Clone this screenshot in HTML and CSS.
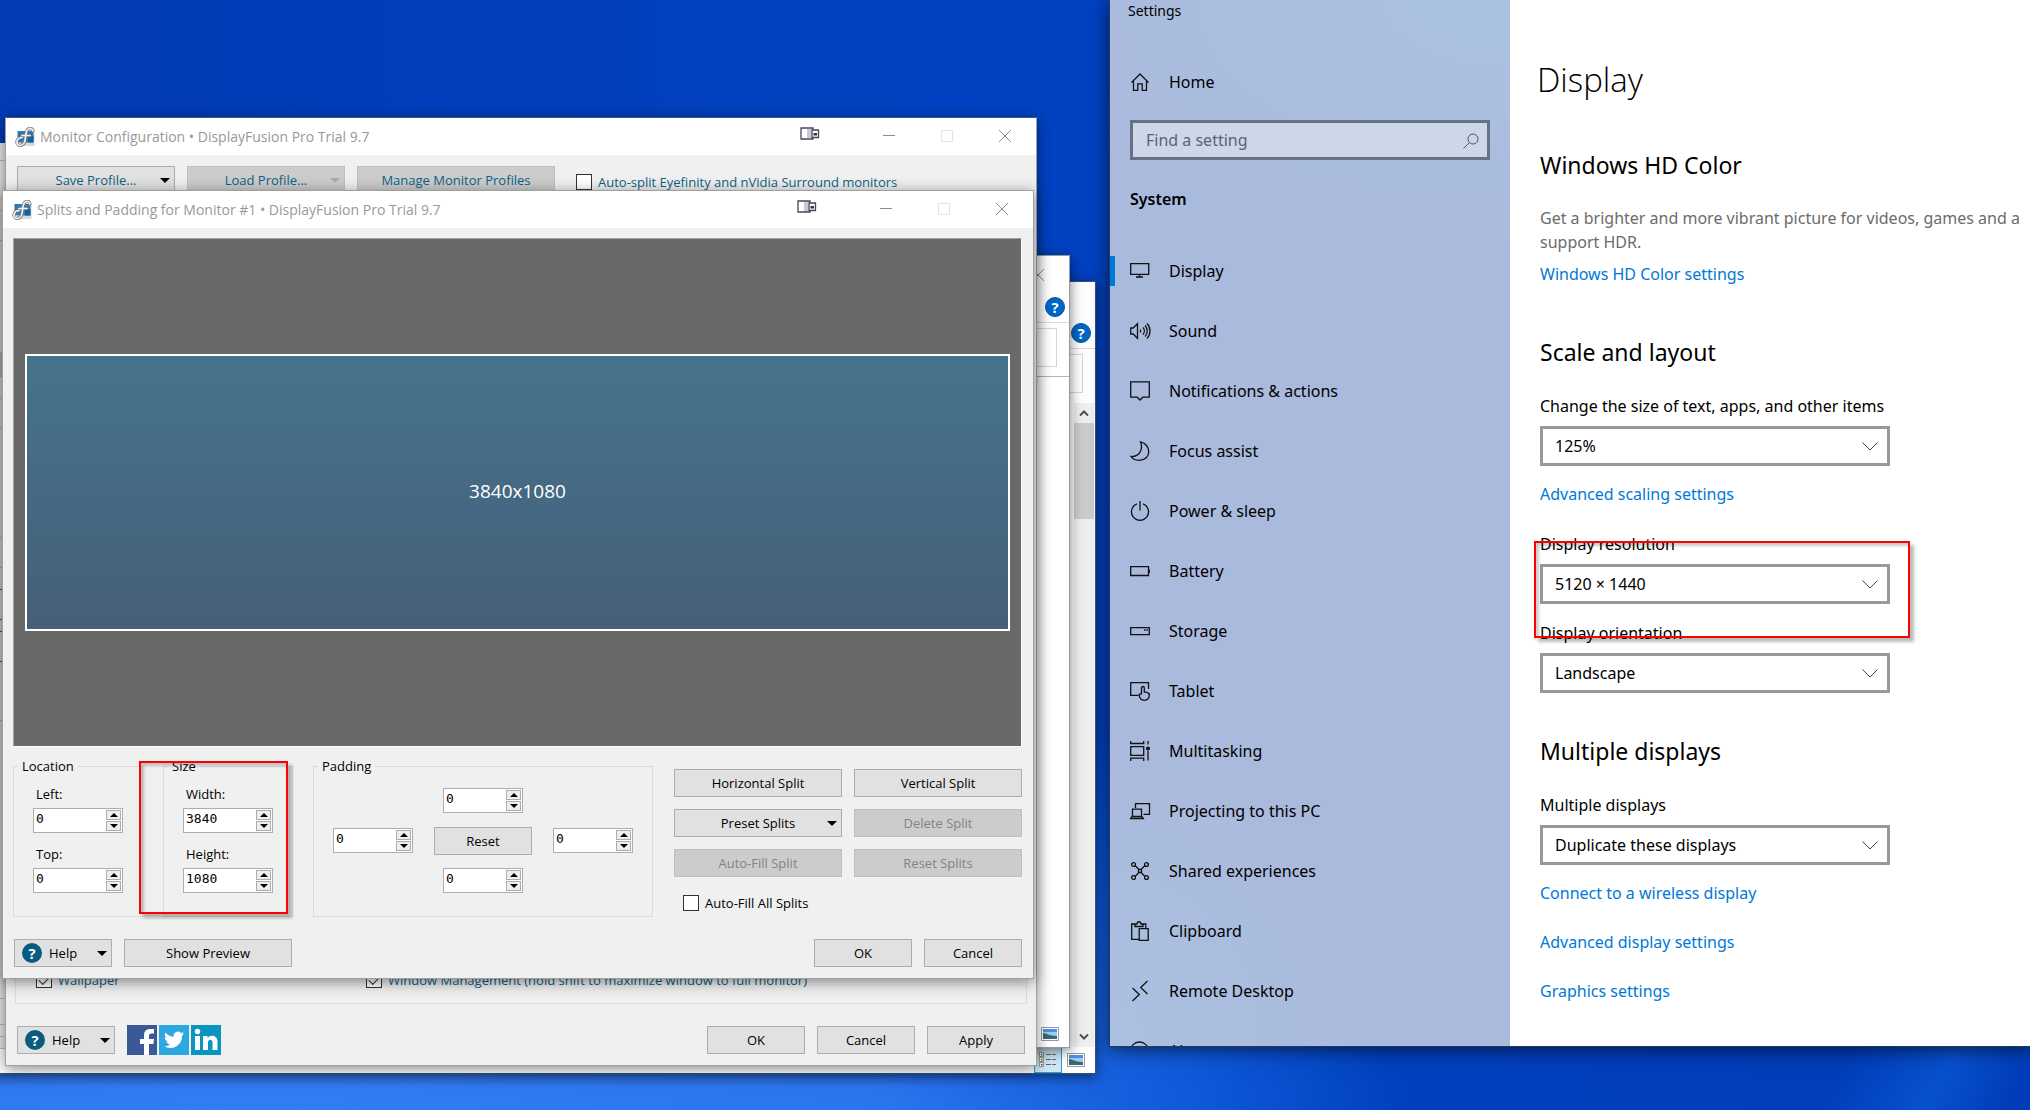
FILE: index.html
```html
<!DOCTYPE html>
<html lang="en">
<head>
<meta charset="utf-8">
<title>Desktop</title>
<link rel="stylesheet" href="styles.css">
</head>
<body>
<svg class="defs" aria-hidden="true">
  <symbol id="df" viewBox="0 0 20 20"><rect x="6" y="4" width="13.500" height="15" fill="#d9d9d9"/><rect x="2.500" y="4" width="16" height="11.500" fill="#2f79b3"/><rect x="13" y="9" width="5.500" height="6.500" fill="#12629e"/><g fill="none" stroke-linecap="round"><path d="M18 4c-1-4-6-3.500-7 2.500l-1 7c-.6 4-3.500 5.500-6.500 4.500-3-2-1.500-7.500 3.500-7.500M7 8.500h8" stroke="#777" stroke-width="3.200"/><path d="M18 4c-1-4-6-3.500-7 2.500l-1 7c-.6 4-3.500 5.500-6.500 4.500-3-2-1.500-7.500 3.500-7.500M7 8.500h8" stroke="#f2f2f2" stroke-width="1.700"/></g></symbol>
  <symbol id="dual" viewBox="0 0 20 14"><path d="M1 1h12v11H1z" fill="#fff" stroke="#44445a" stroke-width="1.300"/><path d="M7 2h4v9H7z" fill="#c9c9d2"/><path d="M12 3h6.500v7.500H12z" fill="#fff" stroke="#44445a" stroke-width="1.300"/><path d="M13.500 6h3.500v2.500h-3.500z" fill="#33334a"/></symbol>
  <symbol id="min" viewBox="0 0 12 12"><path d="M0 5.500h12" stroke="#8d8d8d"/></symbol>
  <symbol id="max" viewBox="0 0 12 12"><path d="M.5.500h11v11H.5z" fill="none" stroke="#e3e3e3"/></symbol>
  <symbol id="x" viewBox="0 0 12 12"><path d="M0 0l12 12M12 0L0 12" stroke="#8d8d8d"/></symbol>
  <symbol id="thumb" viewBox="0 0 18 14"><path d="M.5.500h17v13H.5z" fill="#fff" stroke="#999"/><path d="M2 2h14v10H2z" fill="#9fcaf4"/><path d="M2 2h14v3H2z" fill="#4d8fe8"/><path d="M2 6c4 0 5 3 14 3v1H2z" fill="#3c6e50"/><path d="M2 10h14v2H2z" fill="#35668f"/></symbol>
  <symbol id="chev" viewBox="0 0 16 9"><path d="M.5.500L8 8l7.500-7.500" fill="none" stroke="#444"/></symbol>
</svg>

<main class="desktop">
  <section class="window explorer back" aria-label="File Explorer">
    <header class="ex-title"><svg class="cap"><use href="#x"/></svg></header>
    <div class="ex-help"><button class="qmark blue" aria-label="Help">?</button></div>
    <div class="ex-ribbon"><span></span></div>
    <div class="ex-body">
      <div class="scrollbar"><button aria-label="Scroll up"><svg width="10" height="8" viewBox="0 0 10 8"><path d="M1 6.500l4-4 4 4" fill="none" stroke="#505050" stroke-width="2"/></svg></button><span class="thumb"></span><button class="down" aria-label="Scroll down"><svg width="10" height="8" viewBox="0 0 10 8"><path d="M1 1.500l4 4 4-4" fill="none" stroke="#505050" stroke-width="2"/></svg></button></div>
    </div>
    <footer class="ex-status"><button class="view on" aria-label="Details"><svg width="18" height="18" viewBox="0 0 18 18"><path d="M.5 1.500h4v4h-4zM.5 6.500h4v4h-4zM.5 11.500h4v4h-4z" fill="#fff" stroke="#999"/><path d="M2 3h1.500v1.500H2z" fill="#2a7d8c"/><path d="M2 8h1.500v1.500H2z" fill="#5a8c1c"/><path d="M2 13h1.500v1.500H2z" fill="#b03020"/><path d="M7 3.500h5M13 3.500h4M7 8.500h5M13 8.500h4M7 13.500h5M13 13.500h4" stroke="#666"/></svg></button><button class="view" aria-label="Large icons"><svg width="18" height="14"><use href="#thumb"/></svg></button></footer>
  </section>

  <section class="window explorer front" aria-label="File Explorer">
    <header class="ex-title"><svg class="cap"><use href="#x"/></svg></header>
    <div class="ex-help"><button class="qmark blue" aria-label="Help">?</button></div>
    <div class="ex-ribbon lined"><span></span></div>
    <div class="ex-body"></div>
    <footer class="ex-status"><button class="view" aria-label="Large icons"><svg width="18" height="14"><use href="#thumb"/></svg></button></footer>
  </section>

  <div class="window edge" aria-hidden="true">
    <i class="h18"></i><i class="h38"></i><i class="h12"></i><i class="h30"></i><i class="h112"></i><i class="h24 gray"></i><i class="h22"></i><i class="h30"></i><i class="h109"></i><i class="h30"></i><i class="h22 dark"></i><i class="h30 dark"></i><i class="h12 dark"></i><i class="h30 dark"></i><i class="h59"></i><i class="h254"></i><i class="h24"></i><i class="h26"></i><i class="h12"></i><i class="h12"></i>
  </div>

  <section class="window dialog config">
    <header class="titlebar"><svg class="logo"><use href="#df"/></svg><h2>Monitor Configuration • DisplayFusion Pro Trial 9.7</h2>
      <button class="dual" aria-label="Move to next monitor"><svg width="20" height="14"><use href="#dual"/></svg></button>
      <button aria-label="Minimize"><svg class="cap"><use href="#min"/></svg></button><button aria-label="Maximize"><svg class="cap"><use href="#max"/></svg></button><button aria-label="Close"><svg class="cap"><use href="#x"/></svg></button></header>
    <div class="toolbar">
      <button class="btn w158 teal drop">Save Profile...</button>
      <button class="btn w158 teal drop" disabled>Load Profile...</button>
      <button class="btn w198 teal" disabled>Manage Monitor Profiles</button>
      <label class="check teal"><input type="checkbox">Auto-split Eyefinity and nVidia Surround monitors</label>
    </div>
    <div class="options">
      <label class="check teal"><input type="checkbox" checked>Wallpaper</label>
      <label class="check teal"><input type="checkbox" checked>Window Management (hold shift to maximize window to full monitor)</label>
    </div>
    <footer class="actions">
      <button class="btn w98 help drop"><span class="qmark">?</span>Help</button>
      <nav class="social">
        <a href="#" aria-label="Facebook"><svg width="30" height="30" viewBox="0 0 30 30"><path d="M0 0h30v30H0z" fill="#3b5998"/><path d="M17 30V19h-4v-5h4v-3.500C17 6 19.500 4 23.500 4H27v4.500h-2.500c-1.800 0-2.500.8-2.500 2.500v3h5l-.6 5H22v11z" fill="#fff"/></svg></a>
        <a href="#" aria-label="Twitter"><svg width="30" height="30" viewBox="0 0 30 30"><path d="M0 0h30v30H0z" fill="#2ca7e0"/><path d="M25 8.600c-.8.400-1.600.6-2.400.7.900-.5 1.500-1.300 1.800-2.300-.8.500-1.700.8-2.600 1a4.100 4.100 0 0 0-7 3.700c-3.400-.2-6.400-1.800-8.400-4.300-1.100 1.900-.5 4.300 1.300 5.500-.7 0-1.300-.2-1.900-.5 0 2 1.400 3.700 3.300 4.100-.6.200-1.200.2-1.800.1.500 1.600 2 2.800 3.800 2.800A8.200 8.200 0 0 1 5 21.100 11.700 11.700 0 0 0 23 10.700c.8-.6 1.500-1.300 2-2.100z" fill="#fff"/></svg></a>
        <a href="#" aria-label="LinkedIn"><svg width="30" height="30" viewBox="0 0 30 30"><path d="M0 0h30v30H0z" fill="#0995c0"/><path d="M4 11h5v14H4zM12 11h4.500v2c2.500-3.800 10-3.200 10 3.600V25h-5v-7.500c0-3.600-4.500-3.400-4.500 0V25h-5z" fill="#fff"/><circle cx="6.500" cy="6.500" r="2.700" fill="#fff"/></svg></a>
      </nav>
      <span class="grow"></span>
      <button class="btn w98">OK</button><button class="btn w98">Cancel</button><button class="btn w98">Apply</button>
    </footer>
  </section>

  <section class="window dialog splits">
    <header class="titlebar"><svg class="logo"><use href="#df"/></svg><h2>Splits and Padding for Monitor #1 • DisplayFusion Pro Trial 9.7</h2>
      <button class="dual" aria-label="Move to next monitor"><svg width="20" height="14"><use href="#dual"/></svg></button>
      <button aria-label="Minimize"><svg class="cap"><use href="#min"/></svg></button><button aria-label="Maximize"><svg class="cap"><use href="#max"/></svg></button><button aria-label="Close"><svg class="cap"><use href="#x"/></svg></button></header>
    <div class="canvas"><div class="monitor">3840x1080</div></div>
    <div class="controls">
      <fieldset class="stack"><legend>Location</legend>
        <label for="left">Left:</label><div class="spin"><input id="left" value="0"><span><button class="up" aria-label="Increase"></button><button class="dn" aria-label="Decrease"></button></span></div>
        <label for="top">Top:</label><div class="spin"><input id="top" value="0"><span><button class="up" aria-label="Increase"></button><button class="dn" aria-label="Decrease"></button></span></div>
      </fieldset>
      <fieldset class="stack"><legend>Size</legend>
        <label for="width">Width:</label><div class="spin"><input id="width" value="3840"><span><button class="up" aria-label="Increase"></button><button class="dn" aria-label="Decrease"></button></span></div>
        <label for="height">Height:</label><div class="spin"><input id="height" value="1080"><span><button class="up" aria-label="Increase"></button><button class="dn" aria-label="Decrease"></button></span></div>
        <div class="redbox size-mark"></div>
      </fieldset>
      <fieldset class="padding"><legend>Padding</legend>
        <div class="pad-grid">
          <div class="spin c2"><input aria-label="Padding top" value="0"><span><button class="up" aria-label="Increase"></button><button class="dn" aria-label="Decrease"></button></span></div>
          <div class="spin c1"><input aria-label="Padding left" value="0"><span><button class="up" aria-label="Increase"></button><button class="dn" aria-label="Decrease"></button></span></div>
          <button class="btn w98">Reset</button>
          <div class="spin"><input aria-label="Padding right" value="0"><span><button class="up" aria-label="Increase"></button><button class="dn" aria-label="Decrease"></button></span></div>
          <div class="spin c2"><input aria-label="Padding bottom" value="0"><span><button class="up" aria-label="Increase"></button><button class="dn" aria-label="Decrease"></button></span></div>
        </div>
      </fieldset>
      <div class="split-grid">
        <button class="btn">Horizontal Split</button><button class="btn">Vertical Split</button>
        <button class="btn drop">Preset Splits</button><button class="btn" disabled>Delete Split</button>
        <button class="btn" disabled>Auto-Fill Split</button><button class="btn" disabled>Reset Splits</button>
        <label class="check"><input type="checkbox">Auto-Fill All Splits</label>
      </div>
    </div>
    <footer class="actions">
      <button class="btn w98 help drop"><span class="qmark">?</span>Help</button>
      <button class="btn w168">Show Preview</button>
      <span class="grow"></span>
      <button class="btn w98">OK</button><button class="btn w98">Cancel</button>
    </footer>
  </section>

  <section class="window settings">
    <aside class="side">
      <div class="app-name">Settings</div>
      <a class="item home" href="#"><svg viewBox="0 0 20 20"><path d="M1.500 10.500L10 2l8.500 8.500M3.500 9v9.300h4.300v-6.500h4.400v6.500h4.300V9"/></svg>Home</a>
      <div class="search"><input type="text" placeholder="Find a setting" aria-label="Find a setting"><svg viewBox="0 0 16 16"><circle cx="10" cy="6" r="5"/><path d="M6.500 9.500L.5 15.500"/></svg></div>
      <h3>System</h3>
      <nav>
        <a class="item active" href="#"><svg viewBox="0 0 20 20"><path d="M.7 2.700h18v10.600H.7zM9.500 13.300v2.500M6 16h7"/></svg>Display</a>
        <a class="item" href="#"><svg viewBox="0 0 20 20"><path d="M.7 7h2.500L7.500 2.500v15L3.200 13H.7zM10.500 8.500v3M13 6.500c1.800 2 1.800 5 0 7M15 4.500c3 3 3 8 0 11M17 2.500c4 4 4 11 0 15"/></svg>Sound</a>
        <a class="item" href="#"><svg viewBox="0 0 20 20"><path d="M.7.800h18.600v15.400h-6.500L10 19l-2.800-2.800H.7z"/></svg>Notifications &amp; actions</a>
        <a class="item" href="#"><svg viewBox="0 0 20 20"><path d="M10.500.800c11 2.500 11.500 18.500-1.500 18.500-3.500 0-6.500-1.300-8-3.800C9 16 13.500 9 10.500.8z"/></svg>Focus assist</a>
        <a class="item" href="#"><svg viewBox="0 0 20 20"><path d="M10 0v9.500M7 2.800a8.500 8.500 0 1 0 6 0"/></svg>Power &amp; sleep</a>
        <a class="item" href="#"><svg viewBox="0 0 20 20"><path d="M.7 5.700h17.800v8.800H.7zM19.300 8.500v3.300"/></svg>Battery</a>
        <a class="item" href="#"><svg viewBox="0 0 20 20"><path d="M.7 6.700h18.600v7H.7zM14 9h1.500M16.500 9H18"/></svg>Storage</a>
        <a class="item" href="#"><svg viewBox="0 0 20 20"><path d="M8.500 14.300H.7V1.700h17.800V8M11.500 13.500V7c0-2 2.800-2 2.800 0v4l3 .6c1.700.3 2.200 1 2 2.700-.2 3-1.700 5-5 5-4 0-5-3-5-6l2.200-.8"/></svg>Tablet</a>
        <a class="item" href="#"><svg viewBox="0 0 20 20"><path d="M.7 5.700h13v8.600H.7zM.7 0v2.500h13V0M.7 20v-2.800h13V20M18 0v3.500M18 10v9.500"/><circle cx="18" cy="7.500" r="1.400" fill="#111"/></svg>Multitasking</a>
        <a class="item" href="#"><svg viewBox="0 0 20 20"><path d="M5.500 7V2.700h14v10.600h-6M2.500 8.200h9v7.300h-9zM.7 17.500h12.600l-1.500-2H2z"/></svg>Projecting to this PC</a>
        <a class="item" href="#"><svg viewBox="0 0 20 20"><path d="M5 4.500L8.500 8M15 4.500L11.500 8M5 15.500L8.500 12M15 15.500L11.500 12M8.500 8.500h3v3h-3z"/><circle cx="3.500" cy="3.500" r="1.900"/><circle cx="16.500" cy="3.500" r="1.900"/><circle cx="3.500" cy="16.500" r="1.900"/><circle cx="16.500" cy="16.500" r="1.900"/></svg>Shared experiences</a>
        <a class="item" href="#"><svg viewBox="0 0 20 20"><path d="M8.500 18.300H1.700V3H5M12.500 3h3.300v4.500M5 5.500V3h2c.3-3 3.700-3 4 0h2v2.500zM9.200 7.700h9v11.600h-9z"/></svg>Clipboard</a>
        <a class="item" href="#"><svg viewBox="0 0 20 20"><path d="M2.500 7l6.800 6.500-6.800 6.500M17.500 0l-6.800 6.500 6.800 6.500"/></svg>Remote Desktop</a>
        <a class="item" href="#"><svg viewBox="0 0 20 20"><circle cx="9.500" cy="10" r="9"/></svg>About</a>
      </nav>
    </aside>
    <article class="page">
      <h1>Display</h1>
      <h2>Windows HD Color</h2>
      <p>Get a brighter and more vibrant picture for videos, games and a<br>support HDR.</p>
      <a class="hd" href="#">Windows HD Color settings</a>
      <h2 class="second">Scale and layout</h2>
      <label for="scale">Change the size of text, apps, and other items</label>
      <div class="select"><select id="scale"><option>125%</option></select><svg><use href="#chev"/></svg></div>
      <a href="#">Advanced scaling settings</a>
      <div class="resolution">
        <label for="res">Display resolution</label>
        <div class="select"><select id="res"><option>5120 × 1440</option></select><svg><use href="#chev"/></svg></div>
        <div class="redbox res-mark"></div>
      </div>
      <label class="next" for="orient">Display orientation</label>
      <div class="select"><select id="orient"><option>Landscape</option></select><svg><use href="#chev"/></svg></div>
      <h2 class="third">Multiple displays</h2>
      <label for="multi">Multiple displays</label>
      <div class="select"><select id="multi"><option>Duplicate these displays</option></select><svg><use href="#chev"/></svg></div>
      <div class="links"><a href="#">Connect to a wireless display</a><a href="#">Advanced display settings</a><a href="#">Graphics settings</a></div>
    </article>
  </section>
</main>
</body>
</html>
```
FILE: styles.css
```css
* { box-sizing: border-box; }
body { margin: 0; font: 13px/18px "Open Sans", "Noto Sans", sans-serif; color: #000; }
h1, h2, h3, p, fieldset { margin: 0; padding: 0; font-weight: 400; }
button, input, select { font: inherit; color: inherit; margin: 0; border-radius: 0; }
button { padding: 0; border: 0; background: none; }
a { text-decoration: none; color: #0078d7; }
svg { display: block; }
.defs { position: absolute; width: 0; height: 0; }

.desktop {
  position: relative; height: 100vh; overflow: hidden; background-color: #0040bd;
  background-image:
    linear-gradient(120deg, transparent 92%, #0850cf 96%, transparent 99%),
    radial-gradient(1150px 620px at 260px 1150px, #337ef4 0, #2a74ee 55%, #0f58d8 82%, transparent 100%),
    linear-gradient(90deg, #013ab4 0, #0042c2 50%, #003cb8 100%);
}
.window { position: absolute; background: #f0f0f0; }

/* Explorer windows behind the dialogs */
.edge { left: -6px; top: 143px; width: 40px; height: 915px; background: #fff; }
.edge i { display: block; border-bottom: 1px solid #bbb; background: #e6e6e6; }
.edge .dark { border-color: #555; }
.edge .gray { background: #c4c4c4; }
.h12 { height: 12px; } .h18 { height: 18px; } .h22 { height: 22px; } .h24 { height: 24px; } .h26 { height: 26px; }
.h30 { height: 30px; } .h38 { height: 38px; } .h59 { height: 59px; } .h109 { height: 109px; } .h112 { height: 112px; } .h254 { height: 254px; }

.explorer { display: flex; flex-direction: column; background: #fff; border: 1px solid #34507e; border-left: 0; box-shadow: 0 3px 12px #0008; }
.back { left: -30px; top: 281px; width: 1126px; height: 793px; }
.front { left: 30px; top: 255px; width: 1040px; height: 793px; border-color: #999; }
.ex-title { height: 37px; padding: 13px 25px 0 0; display: flex; justify-content: flex-end; }
.ex-help { height: 30px; padding: 4px 4px 0 0; display: flex; justify-content: flex-end; border-bottom: 1px solid #dadada; }
.ex-ribbon { height: 54px; padding: 5px 12px 10px; }
.ex-ribbon span { display: block; height: 39px; border: 1px solid #d5d5d5; }
.lined { border-bottom: 1px solid #b5b5b5; }
.ex-body { flex: 1; display: flex; justify-content: flex-end; }
.scrollbar { width: 20px; margin-right: 1px; display: flex; flex-direction: column; align-items: center; background: #f0f0f0; }
.scrollbar button { height: 20px; display: flex; align-items: center; }
.scrollbar .thumb { width: 20px; height: 96px; background: #cdcdcd; }
.scrollbar .down { margin-top: auto; }
.ex-status { height: 26px; padding-right: 5px; display: flex; justify-content: flex-end; }
.view { width: 28px; display: grid; place-items: center; }
.on { background: #cce8f6; border: 1px solid #26a0da; }

/* DisplayFusion dialogs */
.dialog { display: flex; flex-direction: column; border: 1px solid #a0a0a0; box-shadow: 0 3px 14px #0007; }
.config { left: 5px; top: 117px; width: 1032px; height: 949px; border-top-color: #3a5488; }
.splits { left: 2px; top: 190px; width: 1032px; height: 789px; }
.titlebar { height: 37px; flex: none; display: flex; align-items: center; background: #fff; padding: 0 2px 0 9px; }
.titlebar h2 { flex: 1; padding-left: 5px; font-size: 14px; line-height: 20px; color: #999; }
.titlebar button { width: 58px; height: 37px; padding-bottom: 2px; display: grid; place-items: center; }
.titlebar .dual { padding-bottom: 6px; margin-right: 21px; }
.logo { width: 20px; height: 20px; }
.cap { width: 12px; height: 12px; }

.btn { position: relative; height: 28px; display: flex; align-items: center; justify-content: center; background: #e1e1e1; border: 1px solid #adadad; }
.btn:disabled { background: #ccc; border-color: #bfbfbf; color: #838383; }
.teal, .btn.teal:disabled { color: #0a6285; }
.w98 { width: 98px; } .w158 { width: 158px; } .w168 { width: 168px; } .w198 { width: 198px; }
.drop::after { content: ""; position: absolute; right: 4px; top: 11px; border: 5px solid transparent; border-top-color: #000; border-bottom: 0; }
.drop:disabled::after { border-top-color: #aaa; }
.help { justify-content: flex-start; padding-left: 7px; gap: 7px; }
.qmark { width: 20px; height: 20px; border-radius: 50%; background: #075c80; color: #fff; font-weight: 700; font-size: 15px; line-height: 20px; text-align: center; }
.blue { background: #0067c6; border: 1px solid #00539f; border-radius: 50%; line-height: 18px; }
.check { display: flex; align-items: center; gap: 6px; height: 16px; white-space: nowrap; }
.check input { appearance: none; width: 16px; height: 16px; border: 1px solid #333; background: #fff; }
.check input:checked::after { content: ""; display: block; width: 10px; height: 5px; margin: 3px 2px; border: solid #333; border-width: 0 0 1px 1px; rotate: -45deg; }

.toolbar { display: flex; gap: 12px; padding: 11px 11px 0; }
.toolbar .check { margin: 8px 0 0 9px; }
.options { flex: 1; display: flex; align-items: flex-end; margin: 12px 9px 22px; padding: 0 20px 15px; border: 1px solid #dcdcdc; }
.options .check:first-child { width: 330px; }
.actions { display: flex; gap: 12px; padding: 0 11px 11px; }
.social { display: flex; gap: 2px; margin: -1px 0; }
.grow { flex: 1; }

.canvas { flex: 1; display: flex; margin: 10px 11px 10px 10px; padding: 115px 11px; background: #696969; border: 1px solid #a0a0a0; border-right-color: #fff; border-bottom-color: #fff; }
.monitor { flex: 1; display: grid; place-items: center; padding-bottom: 3px; border: 2px solid #fff; background: linear-gradient(#45738b, #466b86 40%, #455f76); color: #fff; font-size: 19px; line-height: 24px; }
.controls { display: flex; padding: 0 11px 0 10px; gap: 20px; height: 160px; }
fieldset { border: 1px solid #dcdcdc; min-width: 0; }
legend { margin-left: -15px; padding: 0 4px; }
.stack { width: 130px; padding: 10px 19px 0; position: relative; }
.stack label { display: block; padding-left: 3px; margin-bottom: 5px; }
.spin { height: 25px; display: flex; background: #fff; border: 1px solid #abadb3; padding: 1px; }
.spin + label { margin-top: 12px; }
.spin input { flex: 1; min-width: 0; border: 0; padding: 0 1px 3px; background: none; font: 13px/18px "DejaVu Sans Mono", monospace; }
.spin span { width: 15px; display: flex; flex-direction: column; gap: 1px; }
.spin button { flex: 1; display: grid; place-items: center; border: 1px solid #adadad; background: #eee; }
.spin button::after { content: ""; border: 4px solid transparent; }
.spin .up::after { border-bottom-color: #000; border-top: 0; }
.spin .dn::after { border-top-color: #000; border-bottom: 0; }
.padding { width: 340px; padding: 13px 18px 0 19px; }
.pad-grid { display: grid; grid-template-columns: 80px 98px 80px; grid-auto-rows: 25px; gap: 15px 21px; align-items: center; }
.c1 { grid-column: 1; }
.c2 { grid-column: 2; margin: 0 9px; }
.split-grid { flex: 1; display: grid; grid-template-columns: 1fr 1fr; grid-auto-rows: 28px; gap: 12px; padding: 12px 0 0 1px; align-items: center; }
.split-grid .check { padding-left: 9px; }
.splits .actions { padding-top: 22px; }

.redbox { position: absolute; border: 2px solid #f00; box-shadow: 4px 4px 3px #0004, inset 3px 3px 3px #0003; pointer-events: none; }
.size-mark { left: -25px; top: -14px; width: 149px; height: 153px; }
.res-mark { left: -6px; top: 9px; width: 376px; height: 97px; }

/* Windows Settings */
.settings { left: 1109px; right: 0; top: -1px; height: 1048px; display: flex; border: 1px solid #26365c; border-right: 0; overflow: hidden; background: #fff; box-shadow: 0 3px 18px #0009; font-family: "Noto Sans", "Open Sans", sans-serif; }
.side { width: 400px; flex: none; background: radial-gradient(500px 260px at 100% 0, #abc2e1, transparent), radial-gradient(260px 300px at 0 100%, #abc1e1, transparent), #aabadc; }
.app-name { height: 52px; padding: 1px 18px; font-size: 14px; line-height: 20px; }
.item { position: relative; display: flex; align-items: center; height: 60px; padding-left: 20px; gap: 19px; color: #000; font-size: 16px; line-height: 24px; }
.item svg { width: 20px; height: 20px; fill: none; stroke: #111; stroke-width: 1.3; overflow: visible; }
.active::before { content: ""; position: absolute; left: 0; top: 15px; width: 5px; height: 30px; background: #0078d7; }
.search { position: relative; margin: 8px 20px 0; }
.search input { display: block; width: 100%; height: 40px; padding: 0 40px 0 13px; border: 3px solid #677289; background: #ccd7ea; font-size: 16px; }
.search input::placeholder { color: #5c6370; opacity: 1; }
.search svg { position: absolute; right: 11px; top: 13px; width: 16px; height: 16px; fill: none; stroke: #50586a; }
.side h3 { height: 81px; padding: 0 20px 3px; display: flex; align-items: center; font-size: 16px; font-weight: 600; }
.page { flex: 1; min-width: 0; padding: 56px 0 0 30px; overflow: hidden; white-space: nowrap; font-size: 16px; line-height: 24px; }
.page h1 { font-family: "Open Sans", sans-serif; font-size: 33px; line-height: 48px; font-weight: 300; margin: 0 0 45px -3px; }
.page h2 { font-size: 23px; line-height: 32px; margin-bottom: 26px; }
.page p { color: #6b6b6b; margin: -1px 0 8px; }
.page label { display: block; margin-bottom: 8px; }
.page a { display: block; margin-top: 16px; }
.page .hd { margin-top: 0; }
.page .second { margin-top: 50px; }
.page .third { margin-top: 42px; }
.page .next { margin-top: 17px; }
.resolution { position: relative; margin-top: 26px; }
.select { position: relative; width: 350px; max-width: 100%; }
.select select { appearance: none; display: block; width: 100%; height: 40px; padding: 0 40px 0 12px; border: 3px solid #999; background: #fff; }
.select svg { position: absolute; right: 12px; top: 16px; width: 16px; height: 9px; }
.links { display: flex; flex-direction: column; gap: 25px; margin-top: 16px; }
.page .links a { margin: 0; }
```
